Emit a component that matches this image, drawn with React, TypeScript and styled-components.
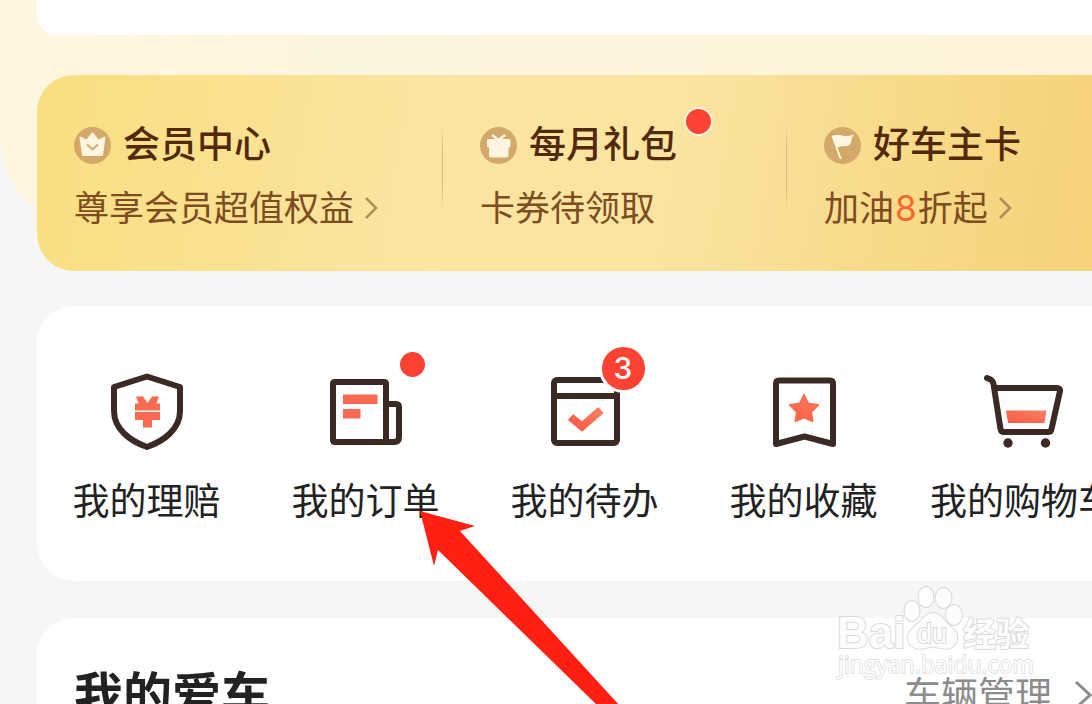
import React from "react";
import styled, { createGlobalStyle } from "styled-components";

const Global = createGlobalStyle`
  * { box-sizing: border-box; }
  body {
    margin: 0;
    background: #f6f6f7;
    font-family: Inter, "Noto Sans CJK SC", sans-serif;
  }
`;

const Page = styled.main`
  position: relative;
  height: 100vh;
  overflow: hidden;
  padding-left: 37px;
  background: #f6f6f7;
`;

const Glow = styled.div`
  position: absolute;
  left: 0;
  right: 0;
  top: 0;
  height: 210px;
  border-bottom-left-radius: 48px 80px;
  background: linear-gradient(90deg, #fff7e0, #fcf5de 40%, #fff3da);
`;

const Card = styled.section`
  position: relative;
  background: #fff;
  border-radius: 37px 0 0 37px;
`;

const TopCard = styled(Card)`
  height: 35px;
  border-radius: 0 0 0 20px;
`;

const MemberCard = styled(Card)`
  display: grid;
  grid-template-columns: 405fr 344fr 306fr;
  margin-top: 40px;
  padding: 45px 0 40px;
  background: linear-gradient(100deg, #f9de80 0%, #fbe5a1 38%, #fae4a0 60%, #f8da88 82%, #f6d27a 100%);
`;

const MemberLink = styled.a<{ $divided?: boolean }>`
  position: relative;
  display: flex;
  flex-direction: column;
  gap: 15px;
  padding-left: ${(p) => (p.$divided ? 38 : 37)}px;
  color: #7d4c20;
  text-decoration: none;
  white-space: nowrap;
  &::before {
    content: "";
    display: ${(p) => (p.$divided ? "block" : "none")};
    position: absolute;
    left: 0;
    top: 8px;
    width: 1px;
    height: 80px;
    background: linear-gradient(#d8bb7600, #d8bb76 25%, #d8bb76 75%, #d8bb7600);
  }
`;

const MemberTitle = styled.span`
  position: relative;
  display: flex;
  align-self: flex-start;
  align-items: center;
  gap: 12px;
  color: #52290c;
  font-size: 37px;
  font-weight: 500;
  line-height: 50px;
`;

const MemberNote = styled.span`
  display: flex;
  align-items: center;
  font-size: 35px;
  line-height: 46px;
`;

const Accent = styled.em`
  padding: 0 1px;
  color: #f5692c;
  font-style: normal;
`;

const NoteArrow = styled.svg`
  width: 14px;
  height: 22px;
  margin-left: 10px;
`;

const Dot = styled.i<{ $ring?: boolean }>`
  position: absolute;
  left: 100%;
  top: 0;
  width: ${(p) => (p.$ring ? 29 : 25)}px;
  height: ${(p) => (p.$ring ? 29 : 25)}px;
  margin: ${(p) => (p.$ring ? "-13px 0 0 7px" : "-20px 0 0 -6px")};
  border: ${(p) => (p.$ring ? "2px solid #fdf1dc" : "0")};
  border-radius: 50%;
  background: #fc4232;
`;

const Count = styled.b`
  position: absolute;
  left: 100%;
  top: 0;
  width: 49px;
  height: 49px;
  margin: -28px 0 0 -26px;
  border: 3px solid #fff;
  border-radius: 50%;
  background: #fc4232;
  color: #fff;
  font-size: 30px;
  font-weight: 500;
  line-height: 43px;
  text-align: center;
`;

const ShortcutCard = styled(Card)`
  margin-top: 35px;
  padding: 66px 0 55px;
`;

const Shortcuts = styled.nav`
  display: grid;
  grid-template-columns: repeat(5, 1fr);
  margin: 0 -40px 0 0;
`;

const Shortcut = styled.a`
  display: flex;
  flex-direction: column;
  align-items: center;
  gap: 25px;
  color: #222;
  font-size: 37px;
  line-height: 49px;
  text-decoration: none;
  white-space: nowrap;
`;

const IconBox = styled.span`
  position: relative;
  width: 80px;
  height: 80px;
`;

const LineIcon = styled.svg`
  display: block;
  width: 80px;
  height: 80px;
  fill: none;
  stroke: #3b2a24;
  stroke-width: 6;
  stroke-linejoin: round;
  stroke-linecap: round;
`;

const CarCard = styled(Card)`
  display: flex;
  align-items: center;
  justify-content: space-between;
  margin-top: 37px;
  padding: 46px 0 44px 37px;
`;

const CarHeading = styled.h2`
  margin: 0;
  color: #222;
  font-size: 49px;
  font-weight: 700;
  line-height: 64px;
`;

const CarLink = styled.a`
  display: flex;
  align-items: center;
  gap: 21px;
  color: #8c8c8c;
  font-size: 37px;
  line-height: 64px;
  text-decoration: none;
`;

const Watermark = styled.svg`
  position: absolute;
  right: 54px;
  top: 582px;
  width: 204px;
  height: 100px;
  fill: #fdfdfd;
  stroke: #d9d9d9;
  stroke-width: 2;
  paint-order: stroke;
  font-family: "Liberation Sans", "Noto Sans CJK SC", sans-serif;
`;

const Pointer = styled.svg`
  position: absolute;
  left: 420px;
  top: 510px;
  width: 200px;
  height: 196px;
  fill: #ff2013;
`;

const Chevron = () => (
  <NoteArrow viewBox="0 0 14 22" fill="none" stroke="#ab8f5c" strokeWidth="2.5">
    <path d="M2 1 L12 11 L2 21" />
  </NoteArrow>
);

const MemberIcon = ({ children }: { children: React.ReactNode }) => (
  <svg width="37" height="37" viewBox="0 0 37 37">
    <circle cx="18.5" cy="18.5" r="18.5" fill="#d3a868" />
    {children}
  </svg>
);

const orange = "url(#orange)";

export default function App() {
  return (
    <Page>
      <Global />
      <Glow />
      <TopCard />
      <MemberCard>
        <MemberLink href="#member">
          <MemberTitle>
            <MemberIcon>
              <path d="M8 28 L5.500 10.500 Q5.500 9.500 6.500 9.500 L12.500 12.500 L17.500 6 Q18.500 5 19.500 6 L24.500 12.500 L30.500 9.500 Q31.500 9.500 31.500 10.500 L29 28 Q29 29 28 29 H9 Q8 29 8 28 Z" fill="#fff5e0" />
              <path d="M13 17.500 L18.500 22.500 L24 17.500" fill="none" stroke="#cbb070" strokeWidth="2" />
            </MemberIcon>
            会员中心
          </MemberTitle>
          <MemberNote>
            尊享会员超值权益
            <Chevron />
          </MemberNote>
        </MemberLink>
        <MemberLink href="#gift" $divided>
          <MemberTitle>
            <MemberIcon>
              <path d="M8 12 H29 Q30.500 12 30.500 13.500 V19 Q30.500 20.500 28.500 20.500 V28 Q28.500 30.500 26 30.500 H11.500 Q9 30.500 9 28 V20.500 Q7 20.500 7 19 V13.500 Q7 12 8 12 Z" fill="#fff5e0" />
              <path d="M12 8 L18.500 13 L25 8" fill="none" stroke="#fff5e0" strokeWidth="2.500" />
            </MemberIcon>
            每月礼包
            <Dot $ring />
          </MemberTitle>
          <MemberNote>卡券待领取</MemberNote>
        </MemberLink>
        <MemberLink href="#card" $divided>
          <MemberTitle>
            <MemberIcon>
              <path d="M7.500 9 Q14 7 18 8.500 Q23 10 30 7.500 Q28 10 27 15 Q26.500 18.500 23 19 Q17 18.500 13.500 20.500 L17.500 31 Q17.500 33 15.500 31.500 Z" fill="#fff5e0" />
            </MemberIcon>
            好车主卡
          </MemberTitle>
          <MemberNote>
            加油<Accent>8</Accent>折起
            <Chevron />
          </MemberNote>
        </MemberLink>
      </MemberCard>

      <ShortcutCard>
        <Shortcuts>
          <Shortcut href="#claims">
            <IconBox>
              <LineIcon viewBox="0 0 80 80">
                <defs>
                  <linearGradient id="orange" x1="0" y1="1" x2="1" y2="0">
                    <stop offset="0" stopColor="#fb5a44" />
                    <stop offset="1" stopColor="#f58062" />
                  </linearGradient>
                </defs>
                <path d="M40 4.500 L73 15 V39 C73 57 57 69 40 75 C23 69 7 57 7 39 V15 Z" />
                <path
                  d="M29 24.500 H36 L40.500 31 L45 24.500 H52 L49.500 31.500 H53 V38.500 H28 V31.500 H31.500 Z M28 40 H53 V48 H45 V55.500 H36 V48 H28 Z"
                  fill="#fa6a50"
                  stroke="none"
                />
              </LineIcon>
            </IconBox>
            我的理赔
          </Shortcut>
          <Shortcut href="#orders">
            <IconBox>
              <LineIcon viewBox="0 0 80 80">
                <path d="M9 10 H58 Q60 10 60 12 V70 H9 Q7 70 7 68 V12 Q7 10 9 10 Z" />
                <path d="M60 32 H70 Q73 32 73 35 V65 Q73 70 68 70 H60" />
                <path d="M17 22.500 H51.500 V32 H17 Z M17 37 H34.500 V46.500 H17 Z" fill="#fa6a50" stroke="none" />
              </LineIcon>
              <Dot />
            </IconBox>
            我的订单
          </Shortcut>
          <Shortcut href="#todo">
            <IconBox>
              <LineIcon viewBox="0 0 80 80">
                <rect x="9" y="8" width="63" height="63" rx="3" />
                <path d="M9 24 H72" />
                <path d="M25.500 45 L37 54.500 L56 38" stroke={orange} strokeWidth="8" strokeLinecap="butt" strokeLinejoin="miter" />
              </LineIcon>
              <Count>3</Count>
            </IconBox>
            我的待办
          </Shortcut>
          <Shortcut href="#favorites">
            <IconBox>
              <LineIcon viewBox="0 0 80 80">
                <path d="M15 8.500 H66 Q69 8.500 69 11.500 V72 L40.500 64.500 L12 72 V11.500 Q12 8.500 15 8.500 Z" />
                <path
                  d="M40 23 L44 31.500 L54 33 L47 40 L48.500 49 L40 45.500 L31.500 49 L33 40 L26 33 L36 31.500 Z"
                  fill={orange}
                  stroke="#fa6c50"
                  strokeWidth="2"
                />
              </LineIcon>
            </IconBox>
            我的收藏
          </Shortcut>
          <Shortcut href="#cart">
            <IconBox>
              <LineIcon viewBox="0 0 80 80">
                <path d="M4 6 L7.500 7.500 Q10 9 10.500 12 L17.500 57 Q18 60 21 60 H65 Q68 60 68.500 57 L77 19 Q77.500 16 74 16 H11" />
                <path d="M23 38.500 H63.500 L61.500 51 H25 Z" fill={orange} stroke="none" />
                <circle cx="25" cy="71" r="4.700" fill="#3b2a24" stroke="none" />
                <circle cx="62.500" cy="71" r="4.700" fill="#3b2a24" stroke="none" />
              </LineIcon>
            </IconBox>
            我的购物车
          </Shortcut>
        </Shortcuts>
      </ShortcutCard>

      <CarCard>
        <CarHeading>我的爱车</CarHeading>
        <CarLink href="#manage">
          车辆管理
          <svg width="19" height="30" viewBox="0 0 19 30" fill="none" stroke="#8c8c8c" strokeWidth="3">
            <path d="M3 1 L17 14 L3 27" />
          </svg>
        </CarLink>
      </CarCard>

      <Watermark viewBox="0 0 204 100">
        <text x="3" y="66" fontSize="44" fontWeight="700">Bai</text>
        <ellipse cx="78" cy="29" rx="7.500" ry="10" />
        <ellipse cx="92" cy="15" rx="7.500" ry="10" />
        <ellipse cx="109.500" cy="16" rx="8" ry="10" />
        <ellipse cx="120" cy="33" rx="8" ry="10" />
        <path d="M99 31 C107 31 109 38 115 43 C122 49 124 52 123 57 C122 66 114 68 107 66 Q99 64 91 66 C84 68 75 66 74 57 C73 51 77 48 82 43 C89 38 91 31 99 31 Z" />
        <text x="83" y="61" fontSize="27">du</text>
        <text x="129" y="64" fontSize="33" fontWeight="700">经验</text>
        <text x="4" y="91" fontSize="23" strokeWidth="1.400" fontFamily="Open Sans">jingyan.baidu.com</text>
      </Watermark>

      <Pointer viewBox="0 0 200 196">
        <path d="M0 1 L55 16 L40 21 L200 196 L178 196 L18 40 L14 56 Z" />
      </Pointer>
    </Page>
  );
}
